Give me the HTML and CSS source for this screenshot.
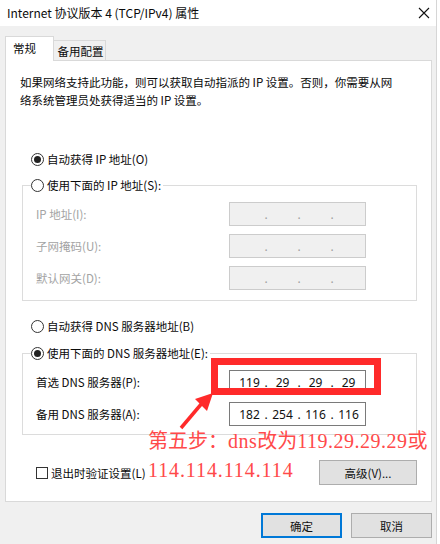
FILE: index.html
```html
<!DOCTYPE html>
<html lang="zh-CN">
<head>
<meta charset="utf-8">
<title>Internet 协议版本 4 (TCP/IPv4) 属性</title>
<link rel="stylesheet" href="styles.css">
</head>
<body>
<div class="window">
  <div class="titlebar">
    <span class="title">Internet 协议版本 4 (TCP/IPv4) 属性</span>
    <svg class="close" width="12" height="12" viewBox="0 0 12 12"><path d="M1 1 L11 11 M11 1 L1 11" stroke="#111" stroke-width="1.1" fill="none"/></svg>
  </div>
  <div class="tabs">
    <div class="tab active">常规</div>
    <div class="tab">备用配置</div>
  </div>
  <div class="panel">
    <p class="desc">如果网络支持此功能，则可以获取自动指派的 IP 设置。否则，你需要从网<br>络系统管理员处获得适当的 IP 设置。</p>

    <div class="option first"><span class="radio checked"></span><span>自动获得 IP 地址(O)</span></div>
    <div class="group ipgroup">
      <div class="legend"><span class="radio"></span><span>使用下面的 IP 地址(S):</span></div>
      <div class="field disabled">
        <span class="label">IP 地址(I):</span>
        <div class="ip"><span class="seg"></span><span class="dot">.</span><span class="seg"></span><span class="dot">.</span><span class="seg"></span><span class="dot">.</span><span class="seg"></span></div>
      </div>
      <div class="field disabled">
        <span class="label">子网掩码(U):</span>
        <div class="ip"><span class="seg"></span><span class="dot">.</span><span class="seg"></span><span class="dot">.</span><span class="seg"></span><span class="dot">.</span><span class="seg"></span></div>
      </div>
      <div class="field disabled">
        <span class="label">默认网关(D):</span>
        <div class="ip"><span class="seg"></span><span class="dot">.</span><span class="seg"></span><span class="dot">.</span><span class="seg"></span><span class="dot">.</span><span class="seg"></span></div>
      </div>
    </div>

    <div class="option dnsauto"><span class="radio"></span><span>自动获得 DNS 服务器地址(B)</span></div>
    <div class="group dnsgroup">
      <div class="legend"><span class="radio checked"></span><span>使用下面的 DNS 服务器地址(E):</span></div>
      <div class="field">
        <span class="label">首选 DNS 服务器(P):</span>
        <div class="ip"><span class="seg">119</span><span class="dot">.</span><span class="seg">29</span><span class="dot">.</span><span class="seg">29</span><span class="dot">.</span><span class="seg">29</span></div>
      </div>
      <div class="field">
        <span class="label">备用 DNS 服务器(A):</span>
        <div class="ip"><span class="seg">182</span><span class="dot">.</span><span class="seg">254</span><span class="dot">.</span><span class="seg">116</span><span class="dot">.</span><span class="seg">116</span></div>
      </div>
    </div>

    <div class="bottomrow">
      <div class="check"><span class="box"></span><span>退出时验证设置(L)</span></div>
      <button class="btn adv">高级(V)...</button>
    </div>
  </div>
  <div class="footer">
    <button class="btn ok">确定</button>
    <button class="btn">取消</button>
  </div>

  <div class="redbox"></div>
  <svg class="arrow" width="440" height="544" viewBox="0 0 440 544">
    <path d="M181 428 L203 402" stroke="#ff2a2a" stroke-width="3.5" fill="none"/>
    <polygon points="213,393 195,399 207,411" fill="#ff2a2a"/>
  </svg>
  <div class="note">
    <div class="l1">第五步：<span class="lat">dns</span>改为<span class="lat">119.29.29.29</span>或</div>
    <div class="l2"><span class="lat">114.114.114.114</span></div>
  </div>
</div>
</body>
</html>
```
FILE: styles.css
```css
* { box-sizing: border-box; }
html, body { margin: 0; padding: 0; }
body {
  width: 440px;
  height: 544px;
  overflow: hidden;
  background: #ffffff;
  font-family: "Noto Sans CJK SC", "Noto Sans", sans-serif;
  font-size: 11.5px;
  color: #0a0a0a;
}
.window {
  position: relative;
  width: 437px;
  height: 544px;
  background: #f0f0f0;
  border-right: 1px solid #d6d6d6;
}
.titlebar {
  height: 26px;
  background: #ffffff;
  display: flex;
  align-items: center;
  justify-content: space-between;
  padding: 0 6px 0 7px;
}
.title { font-size: 12px; line-height: 18px; }
.close { display: block; }

.tabs {
  display: flex;
  align-items: flex-end;
  margin: 10px 0 0 5px;
}
.tab {
  height: 20px;
  width: 52px;
  border: 1px solid #d9d9d9;
  border-bottom: none;
  border-left: none;
  background: #f0f0f0;
  display: flex;
  align-items: center;
  justify-content: center;
  padding-left: 2px;
  line-height: 16px;
}
.tab.active {
  position: relative;
  z-index: 1;
  height: 25px;
  width: 49px;
  border-left: 1px solid #d9d9d9;
  background: #ffffff;
  margin-bottom: -1px;
  padding-bottom: 3px;
  justify-content: flex-start;
  padding-left: 7px;
}

.panel {
  margin-left: 5px;
  width: 427px;
  height: 442px;
  background: #ffffff;
  border: 1px solid #d9d9d9;
  display: flex;
  flex-direction: column;
}
.desc {
  margin: 12px 0 0 14px;
  line-height: 18px;
}
.option, .legend {
  display: flex;
  align-items: center;
  gap: 3px;
  height: 18px;
  line-height: 18px;
}
.option.first { margin: 41px 0 0 25px; }
.option.dnsauto { margin: 16px 0 0 25px; }

.radio {
  width: 13px;
  height: 13px;
  border: 1px solid #333;
  border-radius: 50%;
  background: #fff;
  display: flex;
  align-items: center;
  justify-content: center;
  flex: none;
}
.radio.checked::after {
  content: "";
  width: 7px;
  height: 7px;
  border-radius: 50%;
  background: #222;
}

.group {
  margin: 17px 14px 0 16px;
  border: 1px solid #dcdcdc;
  display: flex;
  flex-direction: column;
}
.group .legend {
  margin: -10px 0 0 8px;
  align-self: flex-start;
  background: #ffffff;
  padding-right: 2px;
}
.ipgroup { gap: 8px; padding-bottom: 10px; }
.dnsgroup { margin-top: 18px; gap: 8px; padding-bottom: 8px; }
.dnsgroup .field:first-of-type { margin-top: -1px; }

.field {
  display: flex;
  align-items: center;
  padding-left: 13px;
  height: 24px;
}
.label { width: 193px; flex: none; }
.field.disabled .label { color: #a3a3a3; }

.ip {
  width: 137px;
  height: 24px;
  border: 1px solid #7a7a7a;
  background: #fff;
  display: flex;
  align-items: center;
  padding-left: 3px;
  font-family: "Noto Sans", "Open Sans", sans-serif;
  font-size: 12px;
  color: #111;
}
.field.disabled .ip {
  background: #f0f0f0;
  border-color: #cccccc;
  color: #a0a0a0;
}
.seg {
  width: 33px;
  text-align: center;
}
.dot {
  width: 0;
  display: flex;
  justify-content: center;
}

.bottomrow {
  margin: 25px 14px 0 30px;
  display: flex;
  align-items: center;
  justify-content: space-between;
  height: 25px;
}
.check {
  display: flex;
  align-items: center;
  gap: 3px;
}
.box {
  width: 12px;
  height: 12px;
  border: 1px solid #333;
  background: #fff;
}

.btn {
  font-family: "Noto Sans CJK SC", "Noto Sans", sans-serif;
  font-size: 11.5px;
  color: #111;
  background: #e1e1e1;
  border: 1px solid #adadad;
  height: 25px;
  width: 81px;
  padding: 0;
  margin: 0;
}
.btn.adv { width: 98px; }
.btn.ok { border: 2px solid #0078d7; }

.footer {
  display: flex;
  justify-content: flex-end;
  gap: 9px;
  margin: 11px 4px 0 0;
}

.redbox {
  position: absolute;
  left: 211px;
  top: 358px;
  width: 170px;
  height: 37px;
  border: 7px solid #ff2a2a;
}
.arrow {
  position: absolute;
  left: 0;
  top: 0;
  pointer-events: none;
}
.note {
  position: absolute;
  left: 148px;
  top: 426px;
  color: #ff4a4a;
  font-size: 20px;
  line-height: 27px;
  font-family: "Noto Sans CJK SC", serif;
  white-space: nowrap;
}
.note .lat {
  font-family: "Liberation Serif", serif;
  letter-spacing: 0.5px;
}
.note .l2 .lat { letter-spacing: 0.9px; }
```
